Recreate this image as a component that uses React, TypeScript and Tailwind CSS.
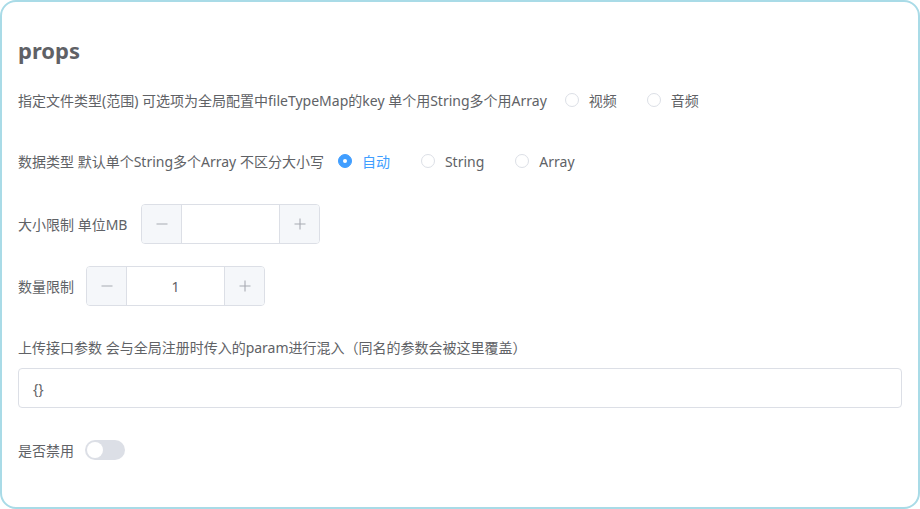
import React from "react";

function Radio({ label, checked }: { label: string; checked?: boolean }) {
  return (
    <label className="flex items-center gap-[10px] cursor-pointer">
      {checked ? (
        <span className="w-[14px] h-[14px] rounded-full bg-[#409eff] border border-[#409eff] flex items-center justify-center">
          <span className="w-[4px] h-[4px] rounded-full bg-white" />
        </span>
      ) : (
        <span className="w-[14px] h-[14px] rounded-full bg-white border border-[#dcdfe6]" />
      )}
      <span className={checked ? "text-[#409eff]" : "text-[#606266]"}>{label}</span>
    </label>
  );
}

function NumberInput({ value }: { value: string }) {
  return (
    <div className="flex h-[40px] w-[179px] border border-[#dcdfe6] rounded-[4px] overflow-hidden bg-white">
      <div className="w-[40px] h-full bg-[#f5f7fa] border-r border-[#dcdfe6] flex items-center justify-center">
        <svg width="14" height="14" viewBox="0 0 14 14">
          <path d="M1.5 7h11" stroke="#a8abb2" strokeWidth="1.1" />
        </svg>
      </div>
      <div className="flex-1 flex items-center justify-center text-[#606266]">{value}</div>
      <div className="w-[40px] h-full bg-[#f5f7fa] border-l border-[#dcdfe6] flex items-center justify-center">
        <svg width="14" height="14" viewBox="0 0 14 14">
          <path d="M1.5 7h11M7 1.5v11" stroke="#a8abb2" strokeWidth="1.1" />
        </svg>
      </div>
    </div>
  );
}

export default function App() {
  return (
    <div
      className="w-[920px] h-[509px] bg-white"
      style={{ fontFamily: '"Noto Sans", "Noto Sans CJK SC", sans-serif' }}
    >
      <div className="w-full h-full border-2 border-[#a9dbe7] rounded-[16px] pl-[16px] pr-[16px] pt-[34px] text-[14px] text-[#606266]">
        <div className="h-[28px] leading-[28px] text-[22px] font-bold text-[#5f6166]">props</div>

        <div className="mt-[20px] h-[32px] flex items-center">
          <span className="mr-[18px]">指定文件类型(范围) 可选项为全局配置中fileTypeMap的key 单个用String多个用Array</span>
          <div className="flex items-center gap-[30px]">
            <Radio label="视频" />
            <Radio label="音频" />
          </div>
        </div>

        <div className="mt-[29px] h-[32px] flex items-center">
          <span className="mr-[14px]">数据类型 默认单个String多个Array 不区分大小写</span>
          <div className="flex items-center gap-[31px]">
            <Radio label="自动" checked />
            <Radio label="String" />
            <Radio label="Array" />
          </div>
        </div>

        <div className="mt-[27px] h-[40px] flex items-center gap-[14px]">
          <span>大小限制 单位MB</span>
          <NumberInput value="" />
        </div>

        <div className="mt-[22px] h-[40px] flex items-center gap-[12px]">
          <span>数量限制</span>
          <NumberInput value="1" />
        </div>

        <div className="mt-[32px] h-[20px] leading-[20px]">
          上传接口参数 会与全局注册时传入的param进行混入（同名的参数会被这里覆盖）
        </div>
        <div className="mt-[10px] h-[40px] w-[884px] border border-[#dcdfe6] rounded-[4px] flex items-center px-[14px] text-[#606266]">
          {"{}"}
        </div>

        <div className="mt-[32px] h-[20px] flex items-center gap-[11px]">
          <span>是否禁用</span>
          <span className="relative w-[40px] h-[20px] rounded-full bg-[#dcdfe6]">
            <span className="absolute left-[2px] top-[2px] w-[16px] h-[16px] rounded-full bg-white" />
          </span>
        </div>
      </div>
    </div>
  );
}
